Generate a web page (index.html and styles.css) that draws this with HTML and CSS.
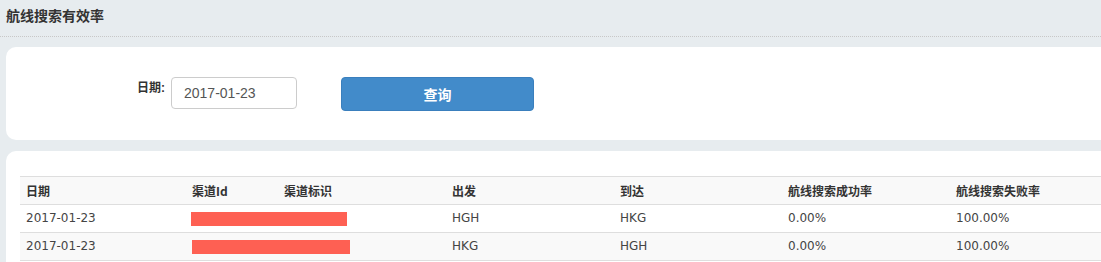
FILE: index.html
```html
<!DOCTYPE html>
<html lang="zh-CN">
<head>
  <meta charset="UTF-8">
  <title>航线搜索有效率</title>
  <link rel="stylesheet" href="styles.css">
</head>
<body>
  <div class="page">
    <div class="page-title">航线搜索有效率</div>

    <div class="panel search-panel">
      <form class="search-form" onsubmit="return false;">
        <label class="form-label" for="date">日期:</label>
        <input class="form-input" id="date" type="text" value="2017-01-23">
        <button class="btn-query" type="submit">查询</button>
      </form>
    </div>

    <div class="panel result-panel">
      <table class="data-table">
        <colgroup>
          <col class="col-date">
          <col class="col-channel">
          <col class="col-mark">
          <col class="col-std">
          <col class="col-std">
          <col class="col-std">
          <col class="col-std">
        </colgroup>
        <thead>
          <tr>
            <th>日期</th>
            <th>渠道Id</th>
            <th>渠道标识</th>
            <th>出发</th>
            <th>到达</th>
            <th>航线搜索成功率</th>
            <th>航线搜索失败率</th>
          </tr>
        </thead>
        <tbody>
          <tr>
            <td>2017-01-23</td>
            <td><span class="redact redact-a"></span></td>
            <td></td>
            <td>HGH</td>
            <td>HKG</td>
            <td>0.00%</td>
            <td>100.00%</td>
          </tr>
          <tr>
            <td>2017-01-23</td>
            <td><span class="redact redact-b"></span></td>
            <td></td>
            <td>HKG</td>
            <td>HGH</td>
            <td>0.00%</td>
            <td>100.00%</td>
          </tr>
        </tbody>
      </table>
    </div>
  </div>
</body>
</html>
```

FILE: styles.css
```css
html, body {
  margin: 0;
  padding: 0;
}

body {
  background-color: #e7ecef;
  color: #333;
  font-family: "Liberation Sans", "Noto Sans CJK SC", sans-serif;
  overflow: hidden;
}

.page {
  width: 1220px;
}

.page-title {
  width: 1095px;
  height: 36px;
  line-height: 32px;
  padding: 0 0 0 6px;
  font-size: 14px;
  font-weight: bold;
  color: #333;
  border-bottom: 1px dotted #c8c8c8;
}

.panel {
  background-color: #fff;
  border-radius: 10px;
  margin-left: 6px;
}

.search-panel {
  margin-top: 10px;
  height: 93px;
  padding-top: 30px;
  box-sizing: border-box;
}

.search-form {
  display: flex;
  align-items: flex-start;
}

.form-label {
  width: 159px;
  padding-right: 6px;
  padding-top: 4px;
  text-align: right;
  font-size: 12px;
  font-weight: bold;
  line-height: 14px;
  color: #333;
}

.form-input {
  width: 126px;
  height: 32px;
  box-sizing: border-box;
  margin: 0;
  padding: 0 12px;
  border: 1px solid #ccc;
  border-radius: 4px;
  font-family: "Liberation Sans", sans-serif;
  font-size: 14px;
  color: #555;
  outline: none;
}

.btn-query {
  margin-left: 44px;
  width: 193px;
  height: 34px;
  border: 1px solid #3a7fbd;
  border-radius: 4px;
  background-color: #428bca;
  color: #fff;
  font-family: "Noto Sans CJK SC", sans-serif;
  font-size: 14px;
  font-weight: bold;
  cursor: pointer;
}

.btn-query:hover {
  background-color: #3276b1;
}

.result-panel {
  margin-top: 11px;
  padding: 25px 0 20px 14px;
}

.data-table {
  table-layout: fixed;
  width: 1098px;
  border-collapse: collapse;
  font-size: 12px;
}

.col-date {
  width: 166px;
}

.col-channel {
  width: 92px;
}

.col-mark,
.col-std {
  width: 168px;
}

.data-table th,
.data-table td {
  text-align: left;
  padding: 0 6px;
  height: 27px;
  line-height: 27px;
  border-top: 1px solid #dedede;
  white-space: nowrap;
}

.data-table th {
  font-family: "Noto Sans CJK SC", sans-serif;
  font-weight: bold;
  color: #333;
}

.data-table td {
  font-family: "DejaVu Sans", "Noto Sans CJK SC", sans-serif;
  color: #444;
}

.data-table thead tr {
  background-color: #f9f9f9;
}

.data-table tbody tr:nth-child(even) {
  background-color: #f9f9f9;
}

.data-table tbody tr:last-child td {
  border-bottom: 1px solid #dedede;
}

.redact {
  display: inline-block;
  height: 14px;
  vertical-align: middle;
  background-color: #fe6053;
}

.redact-a {
  width: 156px;
  margin-left: -1px;
}

.redact-b {
  width: 158px;
}
```
